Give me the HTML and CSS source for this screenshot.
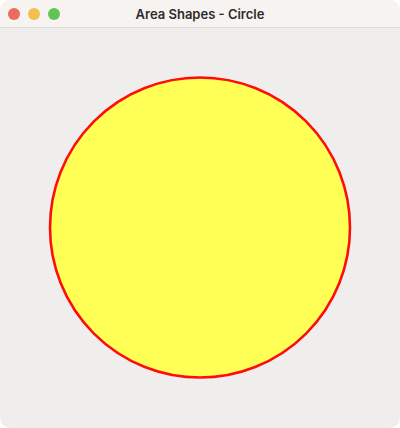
FILE: index.html
```html
<!DOCTYPE html>
<html>
<head>
<meta charset="utf-8">
<link rel="stylesheet" href="styles.css">
</head>
<body>
<div class="window">
  <div class="titlebar">
    <div class="lights">
      <span class="light red"></span>
      <span class="light yellow"></span>
      <span class="light green"></span>
    </div>
    <div class="title">Area Shapes - Circle</div>
  </div>
  <div class="content">
    <svg class="canvas" width="400" height="400" viewBox="0 0 400 400">
      <circle cx="200" cy="199.5" r="150" fill="#ffff55" stroke="#ff0d0d" stroke-width="2.6"/>
    </svg>
  </div>
</div>
</body>
</html>
```
FILE: styles.css
```css
html, body {
  margin: 0;
  padding: 0;
  background: #ffffff;
}
.window {
  width: 400px;
  height: 428px;
  border-radius: 10px;
  overflow: hidden;
  background: #f0eeed;
  display: flex;
  flex-direction: column;
}
.titlebar {
  height: 28px;
  box-sizing: border-box;
  border-bottom: 1px solid #dedbd9;
  background: #f6f3f1;
  position: relative;
  display: flex;
  align-items: center;
  justify-content: center;
}
.lights {
  position: absolute;
  left: 8px;
  top: 8px;
  display: flex;
  gap: 8px;
}
.light {
  width: 12px;
  height: 12px;
  border-radius: 50%;
  display: block;
}
.red { background: #ed6a5e; }
.yellow { background: #f5bf4f; }
.green { background: #61c554; }
.title {
  font-family: "Inter", "Liberation Sans", sans-serif;
  font-weight: 600;
  font-size: 13px;
  color: #2e2c2b;
  margin-top: 1px;
}
.content {
  flex: 1;
}
.canvas {
  display: block;
}
```
